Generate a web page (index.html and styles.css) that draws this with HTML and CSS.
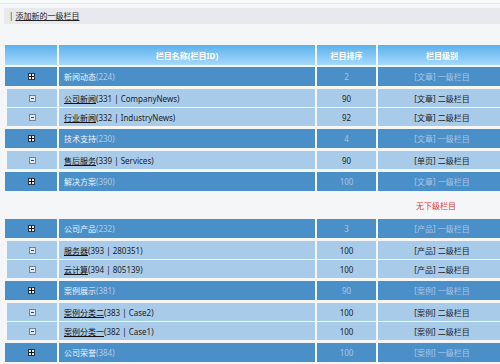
FILE: index.html
```html
<!DOCTYPE html>
<html>
<head>
<meta charset="utf-8">
<link rel="stylesheet" href="styles.css">
</head>
<body>
<div class="topline"></div>
<div class="toolbar">| <a class="addlink">添加新的一级栏目</a></div>

<div class="tbl">
  <div class="row head">
    <div class="c"></div>
    <div class="c">栏目名称(栏目ID)</div>
    <div class="c">栏目排序</div>
    <div class="c">栏目级别</div>
  </div>

  <div class="group">
    <div class="row l1">
      <div class="c"><span class="ico plus"></span></div>
      <div class="c name">新闻动态<span class="id">(224)</span></div>
      <div class="c">2</div>
      <div class="c">[文章] 一级栏目</div>
    </div>
    <div class="kids">
      <div class="row l2">
        <div class="c"><span class="ico minus"></span></div>
        <div class="c name"><a>公司新闻</a>(331 | CompanyNews)</div>
        <div class="c">90</div>
        <div class="c">[文章] 二级栏目</div>
      </div>
      <div class="row l2">
        <div class="c"><span class="ico minus"></span></div>
        <div class="c name"><a>行业新闻</a>(332 | IndustryNews)</div>
        <div class="c">92</div>
        <div class="c">[文章] 二级栏目</div>
      </div>
    </div>
  </div>

  <div class="group">
    <div class="row l1">
      <div class="c"><span class="ico plus"></span></div>
      <div class="c name">技术支持<span class="id">(230)</span></div>
      <div class="c">4</div>
      <div class="c">[文章] 一级栏目</div>
    </div>
    <div class="kids">
      <div class="row l2">
        <div class="c"><span class="ico minus"></span></div>
        <div class="c name"><a>售后服务</a>(339 | Services)</div>
        <div class="c">90</div>
        <div class="c">[单页] 二级栏目</div>
      </div>
    </div>
  </div>

  <div class="group">
    <div class="row l1">
      <div class="c"><span class="ico plus"></span></div>
      <div class="c name">解决方案<span class="id">(390)</span></div>
      <div class="c">100</div>
      <div class="c">[文章] 一级栏目</div>
    </div>
    <div class="kids">
      <div class="row empty">
        <div class="c"></div>
        <div class="c"></div>
        <div class="c"></div>
        <div class="c none">无下级栏目</div>
      </div>
    </div>
  </div>

  <div class="group">
    <div class="row l1">
      <div class="c"><span class="ico plus"></span></div>
      <div class="c name">公司产品<span class="id">(232)</span></div>
      <div class="c">3</div>
      <div class="c">[产品] 一级栏目</div>
    </div>
    <div class="kids">
      <div class="row l2">
        <div class="c"><span class="ico minus"></span></div>
        <div class="c name"><a>服务器</a>(393 | 280351)</div>
        <div class="c">100</div>
        <div class="c">[产品] 二级栏目</div>
      </div>
      <div class="row l2">
        <div class="c"><span class="ico minus"></span></div>
        <div class="c name"><a>云计算</a>(394 | 805139)</div>
        <div class="c">100</div>
        <div class="c">[产品] 二级栏目</div>
      </div>
    </div>
  </div>

  <div class="group">
    <div class="row l1">
      <div class="c"><span class="ico plus"></span></div>
      <div class="c name">案例展示<span class="id">(381)</span></div>
      <div class="c">90</div>
      <div class="c">[案例] 一级栏目</div>
    </div>
    <div class="kids">
      <div class="row l2">
        <div class="c"><span class="ico minus"></span></div>
        <div class="c name"><a>案例分类二</a>(383 | Case2)</div>
        <div class="c">100</div>
        <div class="c">[案例] 二级栏目</div>
      </div>
      <div class="row l2">
        <div class="c"><span class="ico minus"></span></div>
        <div class="c name"><a>案例分类一</a>(382 | Case1)</div>
        <div class="c">100</div>
        <div class="c">[案例] 二级栏目</div>
      </div>
    </div>
  </div>

  <div class="group">
    <div class="row l1">
      <div class="c"><span class="ico plus"></span></div>
      <div class="c name">公司荣誉<span class="id">(384)</span></div>
      <div class="c">100</div>
      <div class="c">[案例] 一级栏目</div>
    </div>
  </div>
</div>
</body>
</html>
```

FILE: styles.css
```css
html, body {
  margin: 0;
  padding: 0;
  overflow: hidden;
}
body {
  background: #f5f6f8;
  font-family: "Noto Sans", "Noto Sans CJK SC", sans-serif;
  font-size: 8px;
  color: #222;
  width: 500px;
  height: 364px;
}
.topline {
  height: 3px;
  background: #f8f9fa;
  border-bottom: 1px solid #e6e8eb;
}
.toolbar {
  margin: 4px 0 0 4px;
  height: 16px;
  line-height: 16px;
  background: #e8e9ec;
  padding-left: 5px;
  color: #333;
}
.addlink {
  text-decoration: underline;
  color: #222;
}
.tbl {
  margin: 21px 0 0 5px;
  width: 520px;
  display: flex;
  flex-direction: column;
  gap: 2px;
}
.row {
  display: grid;
  grid-template-columns: 52px 256px 59px 128px;
  column-gap: 2px;
}
.c {
  display: flex;
  align-items: center;
  justify-content: center;
  white-space: nowrap;
}
.c.name {
  justify-content: flex-start;
  padding-left: 5px;
}
.head {
  height: 20px;
}
.head .c {
  background: linear-gradient(#5cb1ec, #a5d9fd);
  color: #fff;
  font-weight: bold;
}
.group {
  display: flex;
  flex-direction: column;
  gap: 3px;
  margin-bottom: 1px;
}
.kids {
  display: flex;
  flex-direction: column;
  gap: 1px;
}
.l1 {
  height: 19px;
}
.l1 .c {
  background: #4b8fc9;
  color: #a9c6e4;
}
.l1 .c.name {
  color: #eef4fa;
}
.l1 .id {
  color: #b4cbe3;
}
.l2 {
  height: 18px;
  margin-left: 2px;
  grid-template-columns: 50px 256px 59px 128px;
}
.l2 .c {
  background: #a9cbea;
  color: #222;
}
.l2 a {
  text-decoration: underline;
  color: #111;
}
.empty {
  height: 22px;
}
.none {
  color: #e8332e;
  padding-right: 12px;
}
.ico {
  display: inline-block;
  width: 5px;
  height: 5px;
  border: 1px solid #6d7b88;
  position: relative;
}
.ico.plus {
  background: #e6e9ec;
  border-color: #2a3440;
}
.ico.plus::before {
  content: "";
  position: absolute;
  left: 0;
  top: 2px;
  width: 5px;
  height: 1px;
  background: #111;
}
.ico.plus::after {
  content: "";
  position: absolute;
  left: 2px;
  top: 0;
  width: 1px;
  height: 5px;
  background: #111;
}
.ico.minus {
  background: #dfe8f1;
  border-color: #6f8296;
}
.ico.minus::before {
  content: "";
  position: absolute;
  left: 1px;
  top: 2px;
  width: 3px;
  height: 1px;
  background: #3b4754;
}
```
